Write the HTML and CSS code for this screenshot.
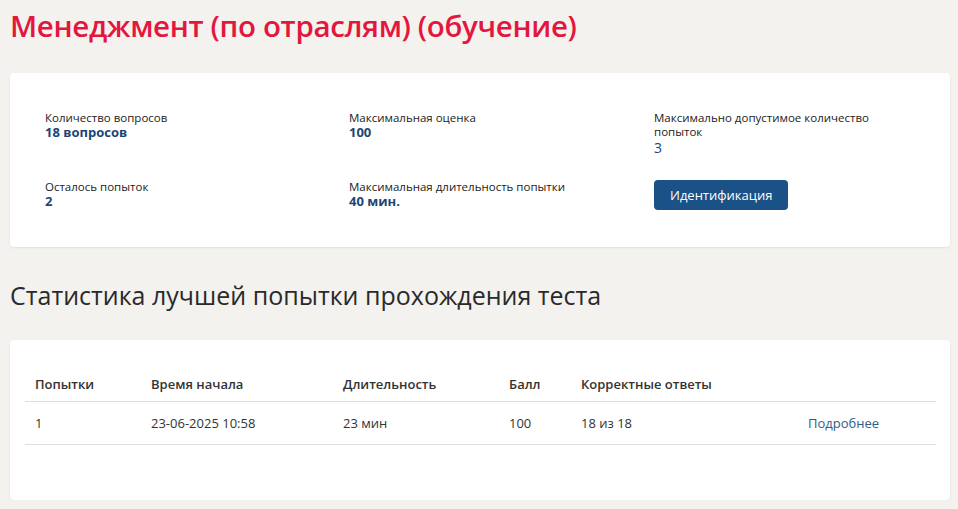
FILE: index.html
```html
<!DOCTYPE html>
<html lang="ru">
<head>
  <meta charset="UTF-8" />
  <meta name="viewport" content="width=device-width, initial-scale=1.0"/>
  <title>Менеджмент (по отраслям) (обучение)</title>
  <link rel="stylesheet" href="styles.css">
</head>
<body>

  <h1 class="page-title">Менеджмент (по отраслям) (обучение)</h1>

  <div class="card info-card">
    <div class="info-grid">
      <div class="info-item">
        <div class="info-label">Количество вопросов</div>
        <div class="info-value">18 вопросов</div>
      </div>
      <div class="info-item">
        <div class="info-label">Максимальная оценка</div>
        <div class="info-value">100</div>
      </div>
      <div class="info-item">
        <div class="info-label">Максимально допустимое количество попыток</div>
        <div class="info-value light">3</div>
      </div>
      <div class="info-item">
        <div class="info-label">Осталось попыток</div>
        <div class="info-value">2</div>
      </div>
      <div class="info-item">
        <div class="info-label">Максимальная длительность попытки</div>
        <div class="info-value">40 мин.</div>
      </div>
      <div class="info-item">
        <a href="#" class="btn-primary">Идентификация</a>
      </div>
    </div>
  </div>

  <h2 class="section-title">Статистика лучшей попытки прохождения теста</h2>

  <div class="card table-card">
    <table class="stats-table">
      <thead>
        <tr>
          <th class="col-try">Попытки</th>
          <th class="col-start">Время начала</th>
          <th class="col-dur">Длительность</th>
          <th class="col-score">Балл</th>
          <th class="col-correct">Корректные ответы</th>
          <th></th>
        </tr>
      </thead>
      <tbody>
        <tr>
          <td>1</td>
          <td>23-06-2025 10:58</td>
          <td>23 мин</td>
          <td>100</td>
          <td>18 из 18</td>
          <td><a href="#" class="details-link">Подробнее</a></td>
        </tr>
      </tbody>
    </table>
  </div>

</body>
</html>
```

FILE: styles.css
```css
:root {
  --bg-color: #f3f2ef;
  --card-color: #ffffff;
  --title-color: #e3173e;
  --text-color: #333333;
  --value-color: #1d4673;
  --button-bg: #1a5186;
  --link-color: #2b5d8a;
  --line-color: #dedede;
}

body {
  margin: 0;
  padding: 0 8px 0 10px;
  font-family: 'Open Sans', 'Noto Sans', sans-serif;
  background-color: var(--bg-color);
  color: var(--text-color);
}

.page-title {
  margin: 0;
  padding-top: 6px;
  font-size: 29.5px;
  line-height: 40px;
  font-weight: 600;
  color: var(--title-color);
  letter-spacing: -0.35px;
}

.card {
  background-color: var(--card-color);
  border-radius: 4px;
  box-shadow: 0 1px 2px rgba(0,0,0,0.08);
}

/* Info block */
.info-card {
  margin-top: 27px;
  padding: 38px 0 37px 35px;
}

.info-grid {
  display: grid;
  grid-template-columns: 304px 305px 230px;
  row-gap: 24px;
}

.info-label {
  font-size: 11.5px;
  line-height: 14px;
  color: #222;
}

.info-value {
  font-size: 13px;
  line-height: 15px;
  font-weight: 700;
  color: var(--value-color);
}

.info-value.light {
  font-weight: 400;
  font-size: 14px;
  line-height: 17px;
}

.btn-primary {
  display: inline-block;
  padding: 0 16px;
  height: 30px;
  line-height: 30px;
  border-radius: 4px;
  background-color: var(--button-bg);
  color: #ffffff;
  font-size: 13px;
  font-weight: 500;
  text-decoration: none;
}

/* Stats */
.section-title {
  margin: 33px 0 0;
  font-size: 25px;
  line-height: 30px;
  font-weight: 400;
  color: #2a2a2a;
  letter-spacing: 0;
}

.table-card {
  margin-top: 30px;
  padding: 25px 14px 55px 15px;
}

.stats-table {
  width: 100%;
  border-collapse: collapse;
  font-size: 13px;
}

.stats-table th {
  text-align: left;
  font-weight: 600;
  padding: 10px 10px 8px;
  border-bottom: 1px solid var(--line-color);
}

.stats-table td {
  padding: 12px 10px 12px;
  border-bottom: 1px solid var(--line-color);
}

.col-try { width: 96px; }
.col-start { width: 172px; }
.col-dur { width: 146px; }
.col-score { width: 52px; }
.col-correct { width: 207px; }

.details-link {
  color: var(--link-color);
  text-decoration: none;
}
```
